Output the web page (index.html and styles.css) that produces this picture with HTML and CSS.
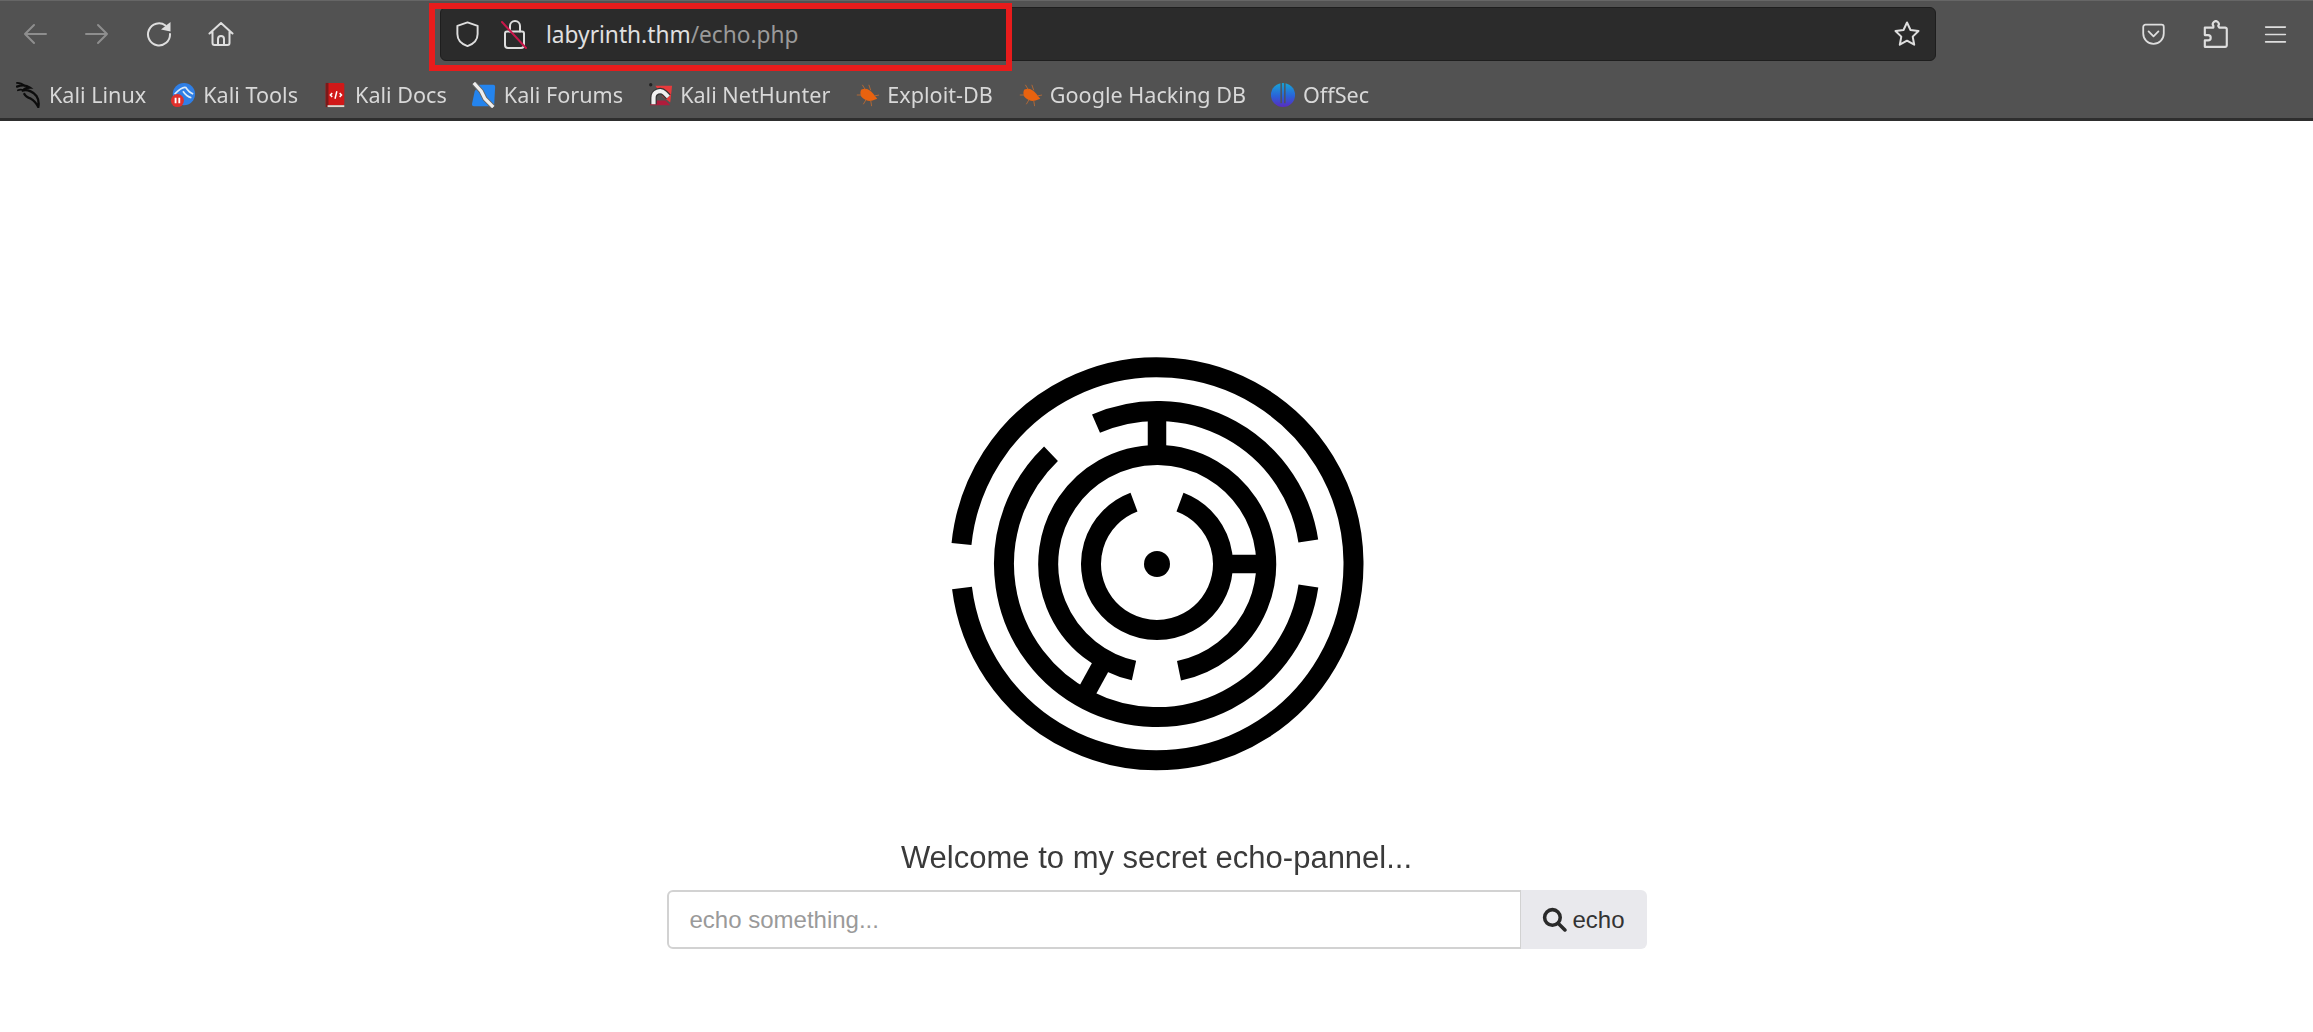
FILE: index.html
```html
<!DOCTYPE html>
<html lang="en">
<head>
<meta charset="utf-8">
<title>labyrinth.thm/echo.php</title>
<link rel="stylesheet" href="styles.css">
</head>
<body>
<header class="chrome">
  <div class="nav-row">
    <div class="nav-buttons">
      <span class="btn"><svg class="ic dim" viewBox="0 0 28 28"><path d="M25 14H4M13 5l-9 9 9 9"/></svg></span>
      <span class="btn"><svg class="ic dim" viewBox="0 0 28 28"><path d="M3 14h21M15 5l9 9-9 9"/></svg></span>
      <span class="btn"><svg class="ic" viewBox="0 0 28 28"><path d="M20.500 5.500A11 11 0 1 0 25 14"/><path class="fill" d="M16 9.500 25.500 2v9.500z"/></svg></span>
      <span class="btn"><svg class="ic" viewBox="0 0 28 28"><path d="M2.500 13.500 14 3l11.500 10.500M5.500 11.500V23a2 2 0 0 0 2 2h13a2 2 0 0 0 2-2V11.500M11 25v-6a3 3 0 0 1 6 0v6"/></svg></span>
    </div>
    <div class="urlbar">
      <svg class="ic shield" viewBox="0 0 28 28"><path d="M14 2 3.500 5.500v8.500C3.500 20 8 24.500 14 26.500c6-2 10.500-6.500 10.500-12.500V5.500z"/></svg>
      <svg class="ic lock" viewBox="0 0 28 32"><path d="M10 13.500V8a5 5 0 0 1 10 0v5.500"/><path d="M5 15.500a2 2 0 0 1 2-2h15a2 2 0 0 1 2 2V27a3 3 0 0 1-3 3H8a3 3 0 0 1-3-3z"/><path class="slash" d="M2 4l24 26"/></svg>
      <span class="url">labyrinth.thm<span class="url-path">/echo.php</span></span>
      <svg class="ic star" viewBox="0 0 28 28"><path d="m14 2.500 3.500 7.500 8 1-5.800 5.600 1.500 8.100L14 20.700l-7.200 4 1.500-8.100L2.500 11l8-1z"/></svg>
      <div class="annotation"></div>
    </div>
    <div class="tools">
      <svg class="ic tool" viewBox="0 0 28 28"><path d="M5 3h18a2.500 2.500 0 0 1 2.500 2.500V13a11.500 11.500 0 0 1-23 0V5.500A2.500 2.500 0 0 1 5 3zM8.500 10.500 14 16l5.500-5.500"/></svg>
      <svg class="ic tool puzzle" viewBox="0 0 28 28"><path d="M12.500 8H4.500v7h3a2.500 2.500 0 0 1 0 5h-3v6h19a1.500 1.500 0 0 0 1.500-1.500V9.500A1.500 1.500 0 0 0 23.500 8H18l-1-1.500a2.800 2.800 0 1 0-4.500 0z"/></svg>
      <svg class="ic tool menu" viewBox="0 0 28 28"><path d="M2 5h24M2 14h24M2 23h24"/></svg>
    </div>
  </div>
  <nav class="bookmarks">
    <a class="bm"><svg class="fav" viewBox="0 0 28 28"><path class="dragon" d="M1 5c5-2 10-2 14 1-3 0-6 0-7 3 5-1 11 2 14 6 2 3 3 7 2 12-2-4-4-7-8-9-3-1-6-3-7-5"/><path class="dragon thin" d="M1 1c3 0 6 1 8 3M2 9c2-1 4-1 6 0"/></svg>Kali Linux</a>
    <a class="bm"><svg class="fav" viewBox="0 0 28 28"><circle cx="15" cy="13" r="12" fill="#2f7fe6"/><path d="M5 13c5-5 9-8 12-7 2 3 5 6 8 7M14 10c2 3 5 6 9 7" fill="none" stroke="#dcebfa" stroke-width="1.800"/><circle cx="8" cy="20" r="7" fill="#e0302c"/><path d="M6 17v6M10 17v6" stroke="#fff" stroke-width="2"/></svg>Kali Tools</a>
    <a class="bm"><svg class="fav" viewBox="-3 0 28 28"><rect x="1" y="1" width="20" height="24" rx="1.500" fill="#d01818"/><rect x="1" y="1" width="3" height="26" fill="#7a1a1a"/><rect x="3" y="25" width="18" height="2" fill="#e4d9d0"/><path d="M8 12l-2 2 2 2M16 12l2 2-2 2M13 10l-2 8" fill="none" stroke="#fff" stroke-width="1.600"/></svg>Kali Docs</a>
    <a class="bm"><svg class="fav" viewBox="0 0 28 28"><path d="M9 3h15a2 2 0 0 1 2 2l-1 19a2 2 0 0 1-2 2H3a2 2 0 0 1-2-2l3-14z" fill="#2484ee"/><path d="M3 1l8 9 4 8 9 9" fill="none" stroke="#666" stroke-width="5.500"/><path d="M3 1l8 9 4 8 9 9" fill="none" stroke="#eee" stroke-width="3.500"/></svg>Kali Forums</a>
    <a class="bm"><svg class="fav" viewBox="0 0 28 28"><path d="M9 4h18l-2 18-8-6z" fill="#e83a3c"/><path d="M3 25h22l-5-5H6z" fill="#b01c3c"/><path d="M7 24v-7a7 7 0 0 1 12-5l4 4" fill="none" stroke="#333" stroke-width="7"/><path d="M7 24v-7a7 7 0 0 1 12-5l4 4" fill="none" stroke="#f0f0f0" stroke-width="4.500"/><circle cx="4" cy="3" r="1.800" fill="#222"/></svg>Kali NetHunter</a>
    <a class="bm"><svg class="fav" viewBox="0 0 28 28"><path class="bug" d="M8 8c5-2 9 0 13 5l4 5-5 2c-4 1-8 0-11-3-2-2-3-6-1-9z"/><path class="bug-leg" d="M3 14l5 0M9 3l3 5M16 3l2 6M10 24l3-5M19 26l-1-6M27 14l-5 1"/></svg>Exploit-DB</a>
    <a class="bm"><svg class="fav" viewBox="0 0 28 28"><path class="bug" d="M8 8c5-2 9 0 13 5l4 5-5 2c-4 1-8 0-11-3-2-2-3-6-1-9z"/><path class="bug-leg" d="M3 14l5 0M9 3l3 5M16 3l2 6M10 24l3-5M19 26l-1-6M27 14l-5 1"/></svg>Google Hacking DB</a>
    <a class="bm"><svg class="fav" viewBox="0 0 28 28"><defs><linearGradient id="offsec" x1="0" y1="0" x2="0" y2="1"><stop offset="0" stop-color="#17a5d6"/><stop offset=".55" stop-color="#2a62d8"/><stop offset="1" stop-color="#5a2bc0"/></linearGradient></defs><ellipse cx="14" cy="14" rx="13" ry="13" fill="url(#offsec)"/><path d="M12 0v23M16 0v23" stroke="#525252" stroke-width="1.500"/></svg>OffSec</a>
  </nav>
</header>
<main class="page">
  <svg class="maze" viewBox="-208 -208 416 416" role="img" aria-label="Labyrinth logo">
    <g class="maze-lines">
      <path d="M-195.500-20A196.500 196.500 0 1 1-195 24"/>
      <path d="M-61-140.300A153 153 0 0 1 151.300-23"/>
      <path d="M-106-110.300A153 153 0 1 0 151.400 22"/>
      <path d="M22 106.800A109 109 0 1 0-23 106.500"/>
      <path d="M23-61.900A66 66 0 1 1-23-61.900"/>
      <path class="spoke" d="M0-153V-109"/>
      <path class="spoke" d="M66 0H109"/>
      <path class="spoke" d="M-52.500 95.500-73.700 134"/>
    </g>
    <circle r="13"/>
  </svg>
  <h1 class="welcome">Welcome to my secret echo-pannel...</h1>
  <form class="echo-form">
    <input class="echo-input" type="text" placeholder="echo something...">
    <button class="echo-btn" type="button"><svg class="search" viewBox="0 0 24 24"><circle cx="10" cy="10" r="7.500"/><path d="M15.500 15.500 22 22"/></svg>echo</button>
  </form>
</main>
</body>
</html>
```
FILE: styles.css
```css
* { box-sizing: border-box; }
html, body { margin: 0; height: 100%; }
body { background: #fff; font-family: "Liberation Sans", Arial, sans-serif; overflow: hidden; }

.chrome {
  height: 121px;
  background: #525252;
  border-top: 1px solid #666;
  border-bottom: 3px solid #2e2e2e;
  font-family: "Noto Sans", sans-serif;
  color: #d8d8d8;
}
.nav-row { height: 66px; display: flex; align-items: center; }
.nav-buttons { display: flex; padding-left: 4px; width: 440px; filter: blur(0.4px); }
.btn { width: 62px; display: flex; justify-content: center; }

.ic { width: 28px; height: 28px; fill: none; stroke: #dedede; stroke-width: 2; stroke-linejoin: round; stroke-linecap: round; flex: none; }
.ic .fill { fill: #dedede; stroke: none; }
.ic.dim { stroke: #8e8e8e; }

.urlbar {
  position: relative;
  width: 1496px;
  height: 54px;
  background: #2b2b2b;
  border: 1px solid #1e1e1e;
  border-radius: 6px;
  display: flex;
  align-items: center;
  padding: 0 14px 0 13px;
}
.shield { width: 27px; height: 28px; }
.lock { margin-left: 19px; width: 28px; height: 32px; }
.lock .slash { stroke: #c9174a; }
.url { margin-left: 18px; font-size: 22.700px; white-space: nowrap; color: #e0e0e0; }
.url-path { color: #9a9a9a; }
.star { margin-left: auto; }
.annotation {
  position: absolute;
  left: -12px;
  top: -5px;
  width: 583px;
  height: 68px;
  border: 6px solid #e81c1c;
  pointer-events: none;
}

.tools { display: flex; align-items: center; margin-left: 205px; gap: 34px; filter: blur(0.4px); }
.tool { width: 25px; height: 25px; }
.tool.puzzle { width: 30px; height: 30px; }
.menu { width: 23px; height: 23px; }

.bookmarks { height: 51px; display: flex; align-items: center; gap: 24px; padding: 4px 0 0 16px; filter: blur(0.5px); }
.bm { display: flex; align-items: center; gap: 7px; font-size: 21.600px; white-space: nowrap; color: #d8d8d8; }
.fav { width: 26px; height: 26px; flex: none; }
.dragon { fill: none; stroke: #0c0c0c; stroke-width: 2.500; stroke-linecap: round; }
.dragon.thin { stroke-width: 1.800; }
.bug { fill: #e8620f; }
.bug-leg { fill: none; stroke: #b56a35; stroke-width: 1; }

.page { display: flex; flex-direction: column; align-items: center; padding-top: 235px; }
.maze { width: 416px; height: 416px; display: block; filter: blur(0.4px); }
.maze-lines { fill: none; stroke: #000; stroke-width: 20; }
.maze-lines .spoke { stroke-width: 18.500; }

.welcome { margin: 64px 0 0; font-weight: 400; font-size: 31px; line-height: 44px; color: #3a3a3a; filter: blur(0.3px); }

.echo-form { display: flex; width: 980px; height: 59px; margin-top: 10px; }
.echo-input {
  flex: 1;
  min-width: 0;
  border: 2px solid #d2d2d2;
  border-right-width: 1px;
  border-radius: 6px 0 0 6px;
  padding: 0 21px;
  font: 24px "Liberation Sans", Arial, sans-serif;
  color: #333;
  background: #fff;
}
.echo-input::placeholder { color: #9a9a9a; opacity: 1; }
.echo-btn {
  width: 126px;
  border: 0;
  border-radius: 0 6px 6px 0;
  background: #e9e9ed;
  font: 24px "Liberation Sans", Arial, sans-serif;
  color: #333;
  display: flex;
  align-items: center;
  justify-content: center;
  gap: 5px;
  padding: 0;
}
.search { width: 25px; height: 25px; fill: none; stroke: #2a2a2a; stroke-width: 3.400; stroke-linecap: round; }
```
